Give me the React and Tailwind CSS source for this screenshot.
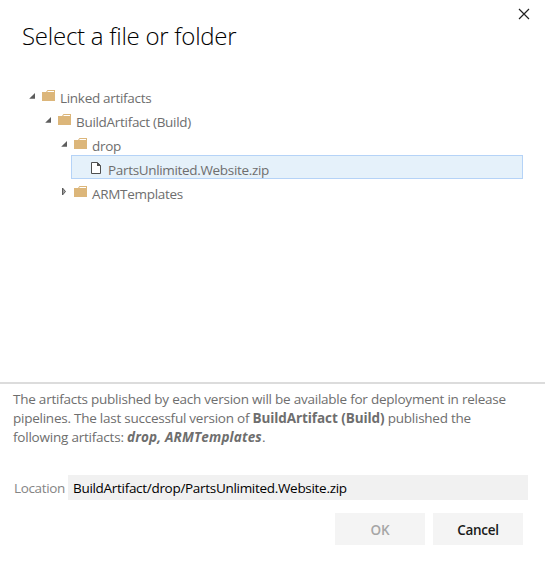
import React from "react";

function Arrow({ open }) {
  return open ? (
    <svg className="mt-[10px] size-[7px] shrink-0" viewBox="0 0 7 7">
      <path d="M6 0V5.8H0.2Z" fill="#5c5c5c" />
    </svg>
  ) : (
    <svg className="mt-2 h-[9px] w-[7px] shrink-0" viewBox="0 0 7 9">
      <path d="M1.5 1V8L4.5 4.5Z" fill="#a0a0a0" stroke="#5c5c5c" strokeWidth="1" />
    </svg>
  );
}

function Folder() {
  return (
    <svg className="mt-[7px] ml-1.5 h-3 w-3.5 shrink-0" viewBox="0 0 14 12">
      <path d="M0 2H4L5.5 0H13V11H0Z" fill="#dcb67a" />
      <path d="M5.5 1.5H12" stroke="#fff" strokeWidth="1" />
    </svg>
  );
}

function FileIcon() {
  return (
    <svg className="mt-[6px] h-[13px] w-[11px] shrink-0" viewBox="0 0 11 13">
      <path d="M0.5 0.5H6.5L9.5 3.5V11.5H0.5Z" fill="#fff" stroke="#4f4f4f" />
      <path d="M6 0.5V4H10L6.5 0.5Z" fill="#4f4f4f" />
    </svg>
  );
}

function FolderRow({ open, indent, label }) {
  return (
    <div className={`flex h-6 items-start ${indent}`}>
      <Arrow open={open} />
      <Folder />
      <span className="ml-1 mt-[5px] leading-5 tracking-[-0.3px]">{label}</span>
    </div>
  );
}

export default function App() {
  return (
    <div className="flex h-[568px] w-[545px] flex-col overflow-hidden bg-white font-['Open_Sans','Noto_Sans',sans-serif] text-[13.5px] text-[#6e6e6e]">
      <header className="flex h-[83px] items-start justify-between pl-[22px] pr-[15px]">
        <h1 className="mt-[19px] whitespace-nowrap text-[24px] font-light leading-[34px] tracking-[-0.25px] text-black">
          Select a file or folder
        </h1>
        <button className="mt-2 size-3" aria-label="Close">
          <svg className="size-3" viewBox="0 0 12 12">
            <path d="M1 1L11 11M11 1L1 11" stroke="#222" strokeWidth="1.2" />
          </svg>
        </button>
      </header>

      <main className="h-[299px] whitespace-nowrap">
        <FolderRow open indent="pl-[29px]" label="Linked artifacts" />
        <FolderRow open indent="pl-[45px]" label="BuildArtifact (Build)" />
        <FolderRow open indent="pl-[61px]" label="drop" />
        <div className="ml-[71px] flex h-6 w-[452px] items-start border border-[#b5d3f7] bg-[#e5f1fa] pl-[19px]">
          <FileIcon />
          <span className="ml-[6px] mt-1 leading-5 tracking-[-0.33px]">PartsUnlimited.Website.zip</span>
        </div>
        <FolderRow indent="pl-[61px]" label="ARMTemplates" />
      </main>

      <footer className="border-t-2 border-[#dcdcdc]">
        <p className="h-[91px] whitespace-nowrap pl-[13px] pt-[6px] leading-[19px]">
          <span className="block tracking-[-0.235px]">The artifacts published by each version will be available for deployment in release</span>
          <span className="block tracking-[-0.245px]">
            pipelines. The last successful version of <b className="font-bold tracking-[-0.08px]">BuildArtifact (Build)</b> published the
          </span>
          <span className="block tracking-[-0.22px]">
            following artifacts: <b className="font-bold italic tracking-[0.16px]">drop, ARMTemplates</b>.
          </span>
        </p>
        <div className="flex h-[25px] items-center pl-[14px]">
          <label className="w-[54px] pt-0.5 tracking-[-0.35px] text-[#858585]">Location</label>
          <div className="flex h-[25px] w-[460px] items-center whitespace-nowrap bg-[#f1f1f1] pl-[5px] pt-px tracking-[-0.3px] text-black">
            BuildArtifact/drop/PartsUnlimited.Website.zip
          </div>
        </div>
        <div className="mt-[13px] flex justify-end gap-2 pr-[22px] font-semibold">
          <button className="h-8 w-[90px] bg-[#f4f4f4] pt-0.5 text-[#a6a6a6]">OK</button>
          <button className="h-8 w-[90px] bg-[#f4f4f4] pt-0.5 tracking-[-0.3px] text-[#1a1a1a]">Cancel</button>
        </div>
      </footer>
    </div>
  );
}
